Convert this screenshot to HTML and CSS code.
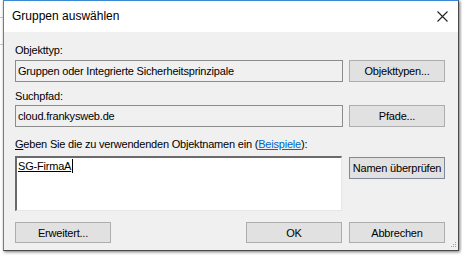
FILE: index.html
```html
<!DOCTYPE html>
<html lang="de">
<head>
<meta charset="utf-8">
<title>Gruppen auswählen</title>
<link rel="stylesheet" href="styles.css">
</head>
<body>
<div class="backdrop"></div>
<div class="window">
  <div class="titlebar">
    <span class="title">Gruppen auswählen</span>
    <svg class="close" width="11" height="11" viewBox="0 0 11 11"><path d="M0.5 0.5 L10.5 10.5 M10.5 0.5 L0.5 10.5" stroke="#222" stroke-width="1.1" fill="none"/></svg>
  </div>
  <div class="content">
    <div class="label l1">Objekttyp:</div>
    <div class="row">
      <div class="field">Gruppen oder Integrierte Sicherheitsprinzipale</div>
      <div class="btn">Objekttypen...</div>
    </div>
    <div class="label l2">Suchpfad:</div>
    <div class="row">
      <div class="field">cloud.frankysweb.de</div>
      <div class="btn">Pfade...</div>
    </div>
    <div class="label l3"><u>G</u>eben Sie die zu verwendenden Objektnamen ein (<a class="link">Beispiele</a>):</div>
    <div class="row row-names">
      <div class="names"><span class="entry">SG-FirmaA</span><span class="caret"></span></div>
      <div class="btn btn-check">Namen überprüfen</div>
    </div>
    <div class="footer">
      <div class="btn">Erweitert...</div>
      <div class="footer-right">
        <div class="btn">OK</div>
        <div class="btn">Abbrechen</div>
      </div>
    </div>
    <svg class="grip" width="7" height="7" viewBox="0 0 7 7">
      <rect x="5" y="0" width="1" height="1" fill="#a0a0a0"/>
      <rect x="3" y="2" width="1" height="1" fill="#a0a0a0"/>
      <rect x="5" y="2" width="1" height="1" fill="#a0a0a0"/>
      <rect x="1" y="4" width="1" height="1" fill="#a0a0a0"/>
      <rect x="3" y="4" width="1" height="1" fill="#a0a0a0"/>
      <rect x="5" y="4" width="1" height="1" fill="#a0a0a0"/>
    </svg>
  </div>
</div>
</body>
</html>
```
FILE: styles.css
```css
html, body {
  margin: 0;
  padding: 0;
  background: #ffffff;
}
body {
  width: 462px;
  height: 255px;
  overflow: hidden;
  position: relative;
  font-family: "Liberation Sans", Arial, sans-serif;
  font-size: 11px;
  color: #000;
}
.backdrop {
  position: absolute;
  left: 0;
  top: 17px;
  width: 3px;
  height: 26px;
  border-top: 1px solid #c8c8c8;
  border-bottom: 1px solid #c8c8c8;
}
.window {
  margin-left: 3px;
  width: 454px;
  height: 249px;
  border-top: 1px solid #3a8ad6;
  border-left: 1px solid #3a8ad6;
  border-right: 1px solid #4a4a4a;
  border-bottom: 1px solid #4a4a4a;
  box-shadow: 1px 1px 3px rgba(0,0,0,0.55);
  background: #f0f0f0;
  display: flex;
  flex-direction: column;
  position: relative;
}
.titlebar {
  height: 31px;
  background: #ffffff;
  display: flex;
  align-items: center;
  justify-content: space-between;
  padding: 0 10px 0 8px;
}
.title {
  font-size: 12px;
  margin-top: -1px;
}
.close {
  display: block;
  margin-top: -1px;
}
.content {
  flex: 1;
  padding: 11px 13px 0 11px;
  display: flex;
  flex-direction: column;
  letter-spacing: -0.2px;
}
.label {
  line-height: 15px;
  height: 15px;
  white-space: nowrap;
}
.l1 { margin-bottom: 2px; }
.l2 { margin-top: 7px; margin-bottom: 1px; }
.l3 { margin-top: 10px; margin-bottom: 4px; }
.link {
  color: #0066cc;
  text-decoration: underline;
}
.row {
  display: grid;
  grid-template-columns: 328px 96px;
  column-gap: 6px;
  align-items: start;
}
.field {
  height: 20px;
  border: 1px solid #8c8c8c;
  background: #f0f0f0;
  line-height: 20px;
  padding-left: 2px;
  white-space: nowrap;
  overflow: hidden;
}
.btn {
  height: 19px;
  border: 1px solid #adadad;
  background: #e1e1e1;
  display: flex;
  align-items: center;
  justify-content: center;
  white-space: nowrap;
}
.row .btn {
  height: 20px;
}
.row-names {
  grid-template-columns: 327px 96px;
  column-gap: 7px;
}
.names {
  height: 51px;
  border-top: 2px solid #6a6a6a;
  border-left: 2px solid #6a6a6a;
  border-right: 1px solid #e6e6e6;
  border-bottom: 1px solid #e6e6e6;
  background: #ffffff;
  padding: 1px 0 0 1px;
  display: flex;
  align-items: flex-start;
}
.entry {
  text-decoration: underline;
  line-height: 14px;
}
.caret {
  display: inline-block;
  width: 1px;
  height: 14px;
  background: #000;
  margin-left: 1px;
}
.btn-check {
  margin-top: 1px;
  height: 19px;
  border-color: #7f8a99;
}
.footer {
  margin-top: 11px;
  display: flex;
  justify-content: space-between;
}
.footer .btn {
  width: 94px;
}
.footer-right {
  display: flex;
  gap: 7px;
}
.grip {
  position: absolute;
  right: 1px;
  bottom: 1px;
}
```
